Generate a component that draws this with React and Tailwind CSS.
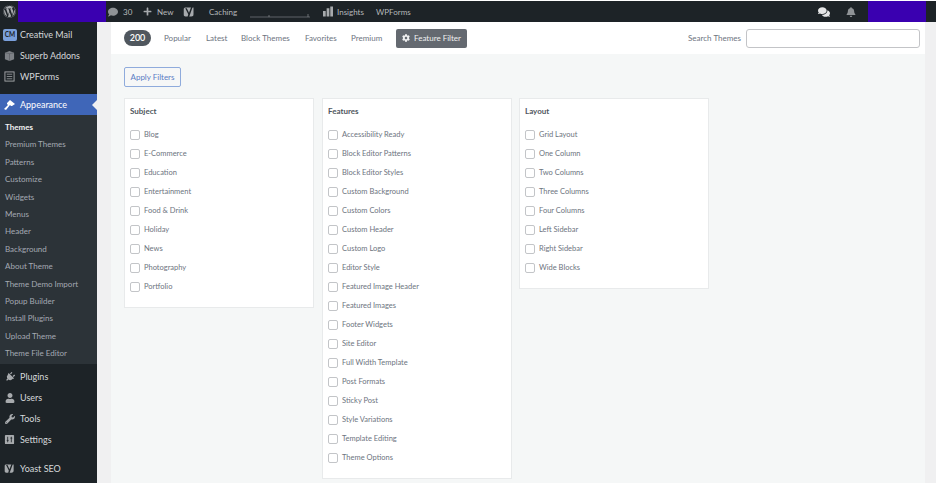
import React from "react";
import { FaWordpress, FaPlus, FaBell, FaPlug, FaUser, FaWrench, FaCog, FaComment, FaComments } from "react-icons/fa";

const subject = ["Blog", "E-Commerce", "Education", "Entertainment", "Food & Drink", "Holiday", "News", "Photography", "Portfolio"];
const features = [
  "Accessibility Ready", "Block Editor Patterns", "Block Editor Styles", "Custom Background", "Custom Colors", "Custom Header",
  "Custom Logo", "Editor Style", "Featured Image Header", "Featured Images", "Footer Widgets", "Site Editor",
  "Full Width Template", "Post Formats", "Sticky Post", "Style Variations", "Template Editing", "Theme Options",
];
const layout = ["Grid Layout", "One Column", "Two Columns", "Three Columns", "Four Columns", "Left Sidebar", "Right Sidebar", "Wide Blocks"];
const submenu = [
  "Premium Themes", "Patterns", "Customize", "Widgets", "Menus", "Header", "Background", "About Theme",
  "Theme Demo Import", "Popup Builder", "Install Plugins", "Upload Theme", "Theme File Editor",
];

const YoastIcon = ({ className }) => (
  <svg viewBox="0 0 16 16" className={className}>
    <path d="M3 2h11v9c0 2-1 3-3 3H3c-1 0-2-1-2-2V4c0-1 1-2 2-2z" fill="#a7aaad" />
    <path d="M5 3l3 6 3-8h2L8 15H6l1-4-4-8z" fill="#1d2327" />
  </svg>
);

const BoxIcon = () => (
  <svg viewBox="0 0 12 12" className="w-[11px] h-[11px]">
    <path d="M1 3l5-2 5 2v7l-5 2-5-2z" fill="#7d8186" />
    <path d="M6 4v8M1 3l5 1 5-1" stroke="#50555a" strokeWidth="0.6" fill="none" />
  </svg>
);

const FormIcon = () => (
  <svg viewBox="0 0 12 12" className="w-[11px] h-[11px]">
    <rect x="1" y="1" width="10" height="10" fill="none" stroke="#a7aaad" strokeWidth="1" />
    <path d="M3 3.500h6M3 6h6M3 8.500h6" stroke="#a7aaad" strokeWidth="0.8" />
  </svg>
);

const BrushIcon = () => (
  <svg viewBox="0 0 12 12" className="w-[12px] h-[12px]">
    <path d="M6 1l5 4-3 2-1 0-1-1-4 5-2-1 4-4-1-1 0-1z" fill="#ffffff" />
  </svg>
);

const SettingsIcon = () => (
  <svg viewBox="0 0 12 12" className="w-[11px] h-[11px]">
    <rect x="1" y="1" width="10" height="10" rx="1" fill="#a7aaad" />
    <path d="M4 3v6M8 3v6M3 7h2M7 4.500h2" stroke="#1d2327" strokeWidth="0.9" />
  </svg>
);

const MenuRow = ({ icon, label, className = "" }) => (
  <div className={`flex items-center h-[21px] pl-[4px] gap-[5px] text-[9px] text-[#d5d8da] ${className}`}>
    <span className="w-[11px] flex justify-center text-[#a7aaad]">{icon}</span>
    <span>{label}</span>
  </div>
);

const FilterCard = ({ title, items }) => (
  <div className="w-[190px] self-start bg-white border border-[#e8eaeb] pt-[6px] pb-[11px] px-[5px]">
    <h4 className="text-[8px] leading-[13px] font-bold text-[#50575e] mb-[7px]">{title}</h4>
    {items.map((item) => (
      <div key={item} className="flex items-center h-[19px] gap-[4px]">
        <span className="w-[10px] h-[10px] rounded-[2px] border border-[#c3c5c8] bg-white"></span>
        <span className="text-[7.5px] text-[#6d7480]">{item}</span>
      </div>
    ))}
  </div>
);

const App = () => {
  return (
    <div className="h-[483px] w-[936px] overflow-hidden bg-white flex flex-col font-['Lato',sans-serif]">
      {/* Admin bar */}
      <div className="mt-[1px] h-[21px] shrink-0 bg-[#1d2327] flex items-center text-[8px] text-[#b4b7ba]">
        <div className="w-[18px] flex justify-center">
          <FaWordpress className="text-[13px] text-[#a7aaad]" />
        </div>
        <div className="w-[88px] h-full bg-[#3a00b0]"></div>
        <FaComment className="ml-[2px] text-[10px] text-[#8f9396]" />
        <span className="ml-[5px] w-[8px]">30</span>
        <FaPlus className="ml-[12px] text-[9px] text-[#a7aaad]" />
        <span className="ml-[5px] w-[16px]">New</span>
        <YoastIcon className="ml-[10px] w-[12px] h-[12px]" />
        <span className="ml-[14px] w-[29px]">Caching</span>
        <svg viewBox="0 0 60 6" className="ml-[12px] w-[60px] h-[6px] mt-[6px]">
          <path d="M0 5h60" stroke="#8c8f94" strokeWidth="0.6" />
          <path d="M19 5V3M58 5V2" stroke="#8c8f94" strokeWidth="0.7" />
        </svg>
        <svg viewBox="0 0 11 11" className="ml-[13px] w-[10px] h-[11px]">
          <path d="M0 5h3v6H0zM4 2h3v9H4zM8 0h3v11H8z" fill="#a7aaad" />
        </svg>
        <span className="ml-[4px] w-[28px]">Insights</span>
        <span className="ml-[11px]">WPForms</span>
        <div className="ml-auto flex items-center h-full">
          <FaComments className="text-[12px] text-[#e5e6e7]" />
          <FaBell className="ml-[16px] text-[10px] text-[#8f9396]" />
          <div className="ml-[12px] w-[58px] h-full -mt-[1px] bg-[#3a00b0] mr-[10px]"></div>
        </div>
      </div>

      <div className="flex flex-1 min-h-0">
        {/* Sidebar */}
        <div className="w-[97px] shrink-0 bg-[#1d2327] pt-[2px]">
          <div className="flex items-center h-[21px] pl-[3px] gap-[3px] text-[9px] text-[#d5d8da]">
            <span className="w-[14px] h-[12px] rounded-[2px] bg-[#7aa0dc] text-[6.5px] font-bold text-[#1d2327] text-center leading-[12px]">CM</span>
            Creative Mail
          </div>
          <MenuRow icon={<BoxIcon />} label="Superb Addons" />
          <MenuRow icon={<FormIcon />} label="WPForms" />

          <div className="mt-[7px] h-[21px] bg-[#3f66b8] flex items-center pl-[4px] gap-[4px] text-[9px] text-white relative">
            <BrushIcon />
            Appearance
            <span className="absolute right-0 top-[6px] border-y-[5px] border-y-transparent border-r-[5px] border-r-[#f0f0f1]"></span>
          </div>

          <div className="bg-[#2c3338] pt-[4px] h-[249px]">
            <div className="h-[17.4px] pl-[5px] text-[8px] leading-[17.4px] font-bold text-[#f0f0f1]">Themes</div>
            {submenu.map((item) => (
              <div key={item} className="h-[17.4px] pl-[5px] text-[8px] leading-[17.4px] text-[#a4a9b3]">{item}</div>
            ))}
          </div>

          <div className="pt-[2px]">
            <MenuRow icon={<FaPlug className="text-[10px] rotate-45" />} label="Plugins" />
            <MenuRow icon={<FaUser className="text-[10px]" />} label="Users" />
            <MenuRow icon={<FaWrench className="text-[10px]" />} label="Tools" />
            <MenuRow icon={<SettingsIcon />} label="Settings" />
            <MenuRow icon={<YoastIcon className="w-[11px] h-[11px]" />} label="Yoast SEO" className="mt-[8px]" />
          </div>
        </div>

        <div className="w-[14px] shrink-0 bg-[#f0f0f1]"></div>

        {/* Content */}
        <div className="w-[814px] shrink-0 bg-[#f5f7f7] flex flex-col">
          <div className="h-[32px] shrink-0 bg-white flex items-center pl-[13px] pr-[5px] text-[8px] text-[#6d7480]">
            <span className="w-[27px] h-[16px] rounded-full bg-[#50575e] text-white text-[9px] font-semibold text-center leading-[16px]">200</span>
            <span className="ml-[13px] w-[27px]">Popular</span>
            <span className="ml-[15px] w-[21px]">Latest</span>
            <span className="ml-[14px] w-[49px]">Block Themes</span>
            <span className="ml-[15px] w-[31px]">Favorites</span>
            <span className="ml-[15px] w-[31px]">Premium</span>
            <div className="ml-[14px] w-[71px] h-[19px] rounded-[2px] bg-[#646970] text-[#f0f0f1] flex items-center justify-center gap-[4px]">
              <FaCog className="text-[8px]" />
              Feature Filter
            </div>
            <span className="ml-auto">Search Themes</span>
            <div className="ml-[5px] w-[174px] h-[19px] bg-white border border-[#c3c4c7] rounded-[3px]"></div>
          </div>

          <div className="pt-[13px] pl-[13px]">
            <div className="w-[57px] h-[20px] rounded-[2px] border border-[#8fabdc] bg-[#f6f7f7] text-[8px] text-[#5a7cc4] text-center leading-[18px]">
              Apply Filters
            </div>
            <div className="flex mt-[11px] gap-[8px]">
              <FilterCard title="Subject" items={subject} />
              <FilterCard title="Features" items={features} />
              <div className="-ml-[1px]">
                <FilterCard title="Layout" items={layout} />
              </div>
            </div>
          </div>
        </div>

        <div className="flex-1 bg-[#f0f0f1]"></div>
      </div>
    </div>
  );
};

export default App;
